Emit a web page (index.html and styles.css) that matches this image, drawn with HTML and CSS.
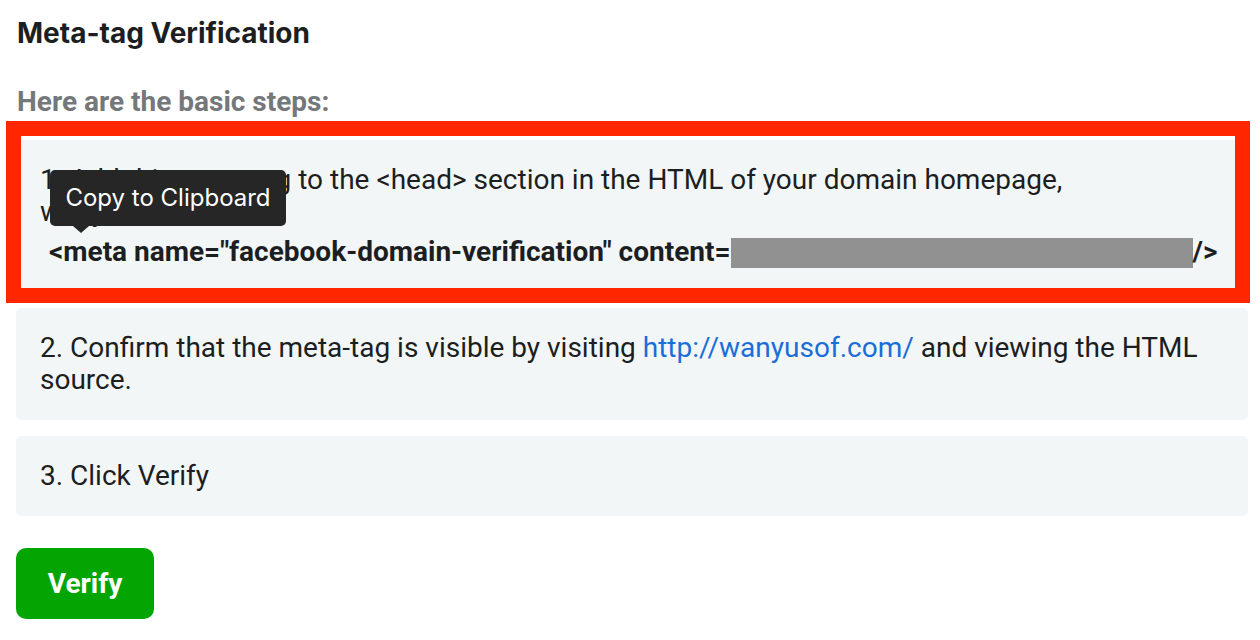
FILE: index.html
```html
<!DOCTYPE html>
<html>
<head>
<meta charset="utf-8">
<link rel="stylesheet" href="styles.css">
</head>
<body>
<div class="page">
  <h1 class="title">Meta-tag Verification</h1>
  <h2 class="subtitle">Here are the basic steps:</h2>
  <div class="steps">
    <div class="card card-first">
      <p class="step-text">1. Add this meta-tag to the &lt;head&gt; section in the HTML of your domain homepage, wanyusof.com</p>
      <div class="meta-line">&lt;meta name="facebook-domain-verification" content=<span class="redact"></span>/&gt;</div>
      <div class="tooltip">Copy to Clipboard</div>
    </div>
    <div class="card">
      <p class="step-text">2. Confirm that the meta-tag is visible by visiting <a class="link" href="#">http://wanyusof.com/</a> and viewing the HTML source.</p>
    </div>
    <div class="card">
      <p class="step-text">3. Click Verify</p>
    </div>
  </div>
  <button class="verify-btn">Verify</button>
  <div class="highlight"></div>
</div>
</body>
</html>
```
FILE: styles.css
```css
* { box-sizing: border-box; }
html, body { margin: 0; padding: 0; background: #fff; }
body { font-family: Roboto, "Noto Sans", sans-serif; color: #1c1e21; }
.page { position: relative; padding: 15px 12px 0 16px; width: 1260px; height: 640px; overflow: hidden; }
.title { margin: 0 0 0 1px; font-family: Inter, Roboto, sans-serif; font-weight: 700; font-size: 28px; line-height: 36px; color: #1c1e21; }
.subtitle { margin: 36px 0 0 1px; font-weight: 700; font-size: 28px; line-height: 30px; color: #75787a; }
.steps { display: flex; flex-direction: column; gap: 16px; margin-top: 23px; }
.card { position: relative; background: #f3f6f7; border-radius: 5px; padding: 24px 24px; }
.step-text { margin: 0; font-size: 28px; line-height: 32px; }
.link { color: #1a6ed8; text-decoration: none; }
.meta-line { margin-top: 8px; padding-left: 9px; font-weight: 700; font-size: 28px; line-height: 32px; white-space: nowrap; }
.redact { display: inline-block; width: 462px; height: 30px; background: #919191; vertical-align: -7px; }
.tooltip { position: absolute; left: 34px; top: 30px; width: 236px; height: 56px; background: #262626; color: #fff; border-radius: 5px; font-family: Inter, Roboto, sans-serif; font-size: 24px; line-height: 56px; text-align: center; }
.tooltip::after { content: ""; position: absolute; left: 23px; bottom: -7px; border-left: 8px solid transparent; border-right: 8px solid transparent; border-top: 7px solid #262626; }
.verify-btn { display: block; margin-top: 32px; width: 138px; height: 71px; padding: 0; border: none; border-radius: 10px; background: #03a503; color: #fff; font-family: Roboto, sans-serif; font-weight: 700; font-size: 28px; cursor: pointer; }
.highlight { position: absolute; left: 6px; top: 121px; width: 1244px; height: 182px; border: 15px solid #ff2600; pointer-events: none; }
```
